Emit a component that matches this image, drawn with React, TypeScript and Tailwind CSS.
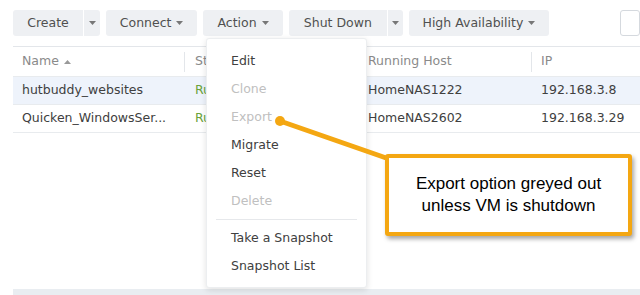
import React from "react";

const Caret = () => (
  <svg width="7" height="4" viewBox="0 0 7 4" className="inline-block">
    <path d="M0 0 L7 0 L3.5 4 Z" fill="#777" />
  </svg>
);

export default function App() {
  const font = { fontFamily: '"DejaVu Sans", Verdana, sans-serif' };
  const menuItems: { label: string; disabled?: boolean; sep?: boolean }[] = [
    { label: "Edit" },
    { label: "Clone", disabled: true },
    { label: "Export", disabled: true },
    { label: "Migrate" },
    { label: "Reset" },
    { label: "Delete", disabled: true },
    { label: "", sep: true },
    { label: "Take a Snapshot" },
    { label: "Snapshot List" },
  ];
  return (
    <div className="relative w-[640px] h-[295px] bg-white overflow-hidden text-[12.5px] text-[#404040]" style={font}>
      {/* toolbar */}
      <div className="flex items-center h-[46px] pl-[13px] pt-[10px] pb-[10px] gap-[6px]">
        <div className="flex h-[26px]">
          <div className="bg-[#eef0f3] rounded-l-[3px] w-[70px] flex items-center justify-center text-[#505050]">Create</div>
          <div className="bg-[#eef0f3] rounded-r-[3px] w-[16px] ml-[1px] flex items-center justify-center"><Caret /></div>
        </div>
        <div className="bg-[#eef0f3] rounded-[3px] h-[26px] w-[95px] flex items-center justify-center gap-[5px] text-[#505050]">Connect <Caret /></div>
        <div className="bg-[#eef0f3] rounded-[3px] h-[26px] w-[83px] flex items-center justify-center gap-[5px] text-[#505050]">Action <Caret /></div>
        <div className="flex h-[26px]">
          <div className="bg-[#eef0f3] rounded-l-[3px] w-[98px] flex items-center justify-center text-[#505050]">Shut Down</div>
          <div className="bg-[#eef0f3] rounded-r-[3px] w-[15px] ml-[1px] flex items-center justify-center"><Caret /></div>
        </div>
        <div className="bg-[#eef0f3] rounded-[3px] h-[26px] w-[146px] flex items-center justify-center gap-[5px] text-[#505050]">High Availability <Caret /></div>
        <div className="ml-[65px] h-[26px] w-[20px] border border-[#d5d9de] rounded-[3px] shrink-0"></div>
      </div>

      {/* table */}
      <div className="ml-[13px] border-t border-[#e3e6ea]">
        <div className="flex h-[30px] items-center text-[#8a8a8a] border-b border-[#e8ebee]">
          <div className="w-[172px] pl-[9px] flex items-center gap-[5px] border-r border-[#e3e6ea] h-[20px]">Name <svg width="7" height="4" viewBox="0 0 7 4"><path d="M0 4 L7 4 L3.5 0 Z" fill="#999" /></svg></div>
          <div className="w-[174px] pl-[10px]">Status</div>
          <div className="w-[173px] pl-[9px] border-r border-[#e3e6ea] h-[20px] flex items-center">Running Host</div>
          <div className="pl-[9px]">IP</div>
        </div>
        <div className="flex h-[28px] items-center bg-[#eef3fb] border-b border-[#e8ebee]">
          <div className="w-[172px] pl-[9px]">hutbuddy_websites</div>
          <div className="w-[174px] pl-[10px] text-[#6aa33a]">Running</div>
          <div className="w-[173px] pl-[9px]">HomeNAS1222</div>
          <div className="pl-[9px]">192.168.3.8</div>
        </div>
        <div className="flex h-[28px] items-center border-b border-[#e8ebee]">
          <div className="w-[172px] pl-[9px] whitespace-nowrap overflow-hidden">Quicken_WindowsSer...</div>
          <div className="w-[174px] pl-[10px] text-[#6aa33a]">Running</div>
          <div className="w-[173px] pl-[9px]">HomeNAS2602</div>
          <div className="pl-[9px]">192.168.3.29</div>
        </div>
      </div>

      {/* bottom bar */}
      <div className="absolute left-[13px] right-0 top-[289px] h-[6px] bg-[#e9edf1]"></div>

      {/* dropdown menu */}
      <div className="absolute left-[206px] top-[38px] w-[161px] h-[250px] bg-white rounded-[3px] border border-[#eceef0] shadow-[0_2px_6px_rgba(0,0,0,0.12)] pt-[8px]">
        {menuItems.map((m, i) =>
          m.sep ? (
            <div key={i} className="mx-[9px] my-[4px] border-t border-[#e6e8eb]"></div>
          ) : (
            <div key={i} className={"h-[28px] flex items-center pl-[24px] " + (m.disabled ? "text-[#c0c0c0]" : "text-[#404040]")}>
              {m.label}
            </div>
          )
        )}
      </div>

      {/* arrow */}
      <svg className="absolute left-0 top-0" width="640" height="295">
        <line x1="280" y1="121" x2="392" y2="160" stroke="#f4a712" strokeWidth="5" strokeLinecap="round" />
        <circle cx="280" cy="121" r="5" fill="#f4a712" />
      </svg>

      {/* callout */}
      <div className="absolute left-[385px] top-[154px] w-[247px] h-[82px] bg-white border-[4px] border-[#f4a712] rounded-[3px] shadow-[2px_3px_4px_rgba(0,0,0,0.35)] flex flex-col items-center justify-center text-black text-[17px] leading-[22px]" style={{ fontFamily: '"Liberation Sans", Arial, sans-serif' }}>
        <div>Export option greyed out</div>
        <div>unless VM is shutdown</div>
      </div>
    </div>
  );
}
